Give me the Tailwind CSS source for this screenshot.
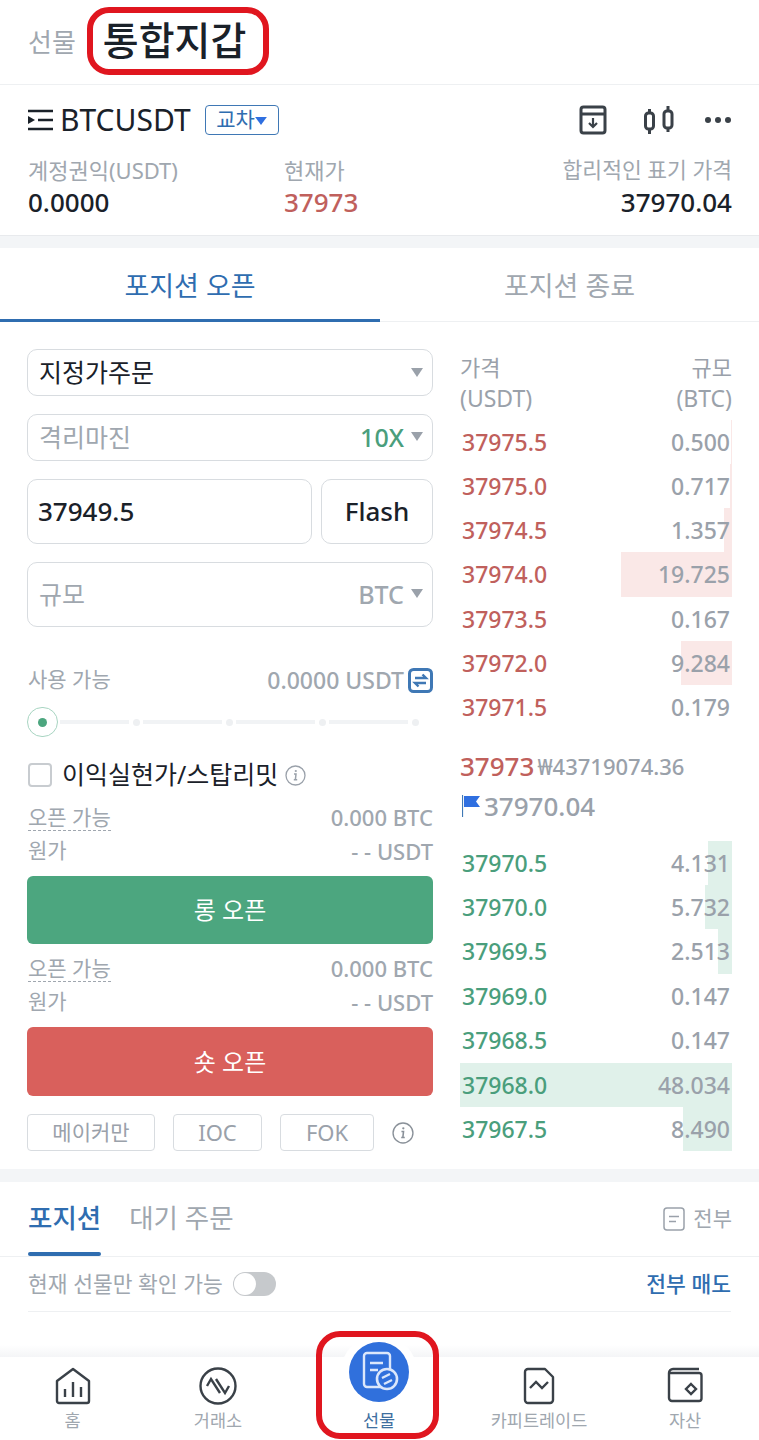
<!DOCTYPE html>
<html lang="ko">
<head>
  <meta charset="UTF-8" />
  <title>Futures</title>
  <script src="https://cdn.jsdelivr.net/npm/@tailwindcss/browser@4"></script>
</head>
<body class="bg-white font-['Noto_Sans','Noto_Sans_CJK_KR',sans-serif] text-[#1a2129]">
<div class="w-[759px] h-[1440px] overflow-hidden flex flex-col">

  <!-- top tabs -->
  <div class="h-[85px] shrink-0 border-b border-[#eef0f2] flex items-center pl-[28px] gap-[27px]">
    <span class="text-[26px] text-[#a0a7af] mt-[1px]">선물</span>
    <span class="relative text-[39px] font-medium leading-none mt-[-6px]">통합지갑
      <span class="absolute left-[-16px] right-[-23px] top-[-13px] bottom-[-16px] border-[6px] border-[#e0161f] rounded-[22px]"></span>
    </span>
  </div>

  <!-- symbol -->
  <div class="h-[151px] shrink-0 border-b border-[#e8eaed] pl-[28px] pr-[27px]">
    <div class="h-[70px] flex items-center">
      <svg class="w-[25px] h-[22px] mr-[7px]" viewBox="0 0 25 22" fill="none">
        <path d="M0 2h25M10 11h15M0 20h25" stroke="#1a2129" stroke-width="2.600"/>
        <path d="M0 7l7 4-7 4z" fill="#1a2129"/>
      </svg>
      <span class="text-[30px] leading-none">BTCUSDT</span>
      <span class="ml-[14px] w-[74px] h-[30px] border border-[#3f78b5] rounded-[4px] flex items-center justify-center text-[#2f6db0] text-[21px]">교차<svg class="w-[12px] h-[9px]" viewBox="0 0 13 10"><path d="M0 1h13L6.500 10z" fill="#2f6fe0"/></svg></span>
      <div class="ml-auto flex items-center">
        <svg class="w-[28px] h-[30px]" viewBox="0 0 28 30" fill="none" stroke="#3a4148" stroke-width="3">
          <rect x="2" y="2" width="24" height="26" rx="2.500"/>
          <path d="M2 9h24"/>
          <path d="M14 13v9M10 18l4 4 4-4" stroke-width="2.200"/>
        </svg>
        <svg class="ml-[37px] w-[30px] h-[28px]" viewBox="0 0 30 28" fill="none" stroke="#3a4148" stroke-width="3">
          <rect x="1.500" y="7" width="8" height="16" rx="3"/>
          <path d="M5.500 3v4M5.500 23v5"/>
          <rect x="20" y="5" width="8" height="17" rx="3"/>
          <path d="M24 0v5M24 22v4"/>
        </svg>
        <svg class="ml-[30px] w-[28px] h-[8px]" viewBox="0 0 28 8" fill="#3a4148">
          <circle cx="4" cy="4" r="3"/><circle cx="14" cy="4" r="3"/><circle cx="24" cy="4" r="3"/>
        </svg>
      </div>
    </div>
    <div class="flex">
      <div class="w-[256px]">
        <div class="text-[22px] leading-[30px] text-[#a0a7af]">계정권익(USDT)</div>
        <div class="text-[26px] leading-[34px] font-medium">0.0000</div>
      </div>
      <div>
        <div class="text-[22px] leading-[30px] text-[#a0a7af]">현재가</div>
        <div class="text-[26px] leading-[34px] font-medium text-[#c0605c]">37973</div>
      </div>
      <div class="ml-auto text-right">
        <div class="text-[21.500px] leading-[30px] text-[#a0a7af]">합리적인 표기 가격</div>
        <div class="text-[26px] leading-[34px] font-medium">37970.04</div>
      </div>
    </div>
  </div>
  <div class="h-[12px] shrink-0 bg-[#f3f5f7]"></div>

  <!-- open / close tabs -->
  <div class="h-[74px] shrink-0 border-b border-[#eef0f2] flex text-[27px]">
    <div class="w-[380px] border-b-[3px] border-[#2f6db0] mb-[-1px] text-[#2f6db0] flex items-center justify-center pt-[5px]">포지션 오픈</div>
    <div class="w-[379px] text-[#a0a7af] flex items-center justify-center pt-[4px]">포지션 종료</div>
  </div>

  <!-- trade panel -->
  <div class="h-[860px] shrink-0 flex pl-[27px] pr-[27px] border-b-[13px] border-[#f3f5f7]">
    <div class="w-[406px] shrink-0 pt-[27px]">
      <div class="h-[47px] border border-[#d8dce0] rounded-[10px] flex items-center pl-[11px] pr-[9px] text-[25px]">지정가주문
        <svg class="ml-auto w-[12px] h-[9px]" viewBox="0 0 12 9"><path d="M0 0h12L6 9z" fill="#9aa1aa"/></svg>
      </div>
      <div class="h-[47px] mt-[18px] border border-[#d8dce0] rounded-[10px] flex items-center pl-[11px] pr-[9px] text-[25px] text-[#a0a7af]">격리마진
        <span class="ml-auto text-[#4a9e7c] font-medium mr-[7px]">10X</span>
        <svg class="w-[12px] h-[9px] mb-[2px]" viewBox="0 0 12 9"><path d="M0 0h12L6 9z" fill="#9aa1aa"/></svg>
      </div>
      <div class="flex gap-[9px] mt-[18px]">
        <div class="w-[285px] h-[65px] border border-[#d8dce0] rounded-[10px] flex items-center px-[10px] text-[26px] font-medium">37949.5</div>
        <div class="w-[112px] h-[65px] border border-[#d8dce0] rounded-[10px] flex items-center justify-center text-[26px] font-medium">Flash</div>
      </div>
      <div class="h-[65px] mt-[18px] border border-[#d8dce0] rounded-[10px] flex items-center pl-[11px] pr-[9px] text-[25px] text-[#a0a7af]">규모
        <span class="ml-auto font-medium mr-[7px]">BTC</span>
        <svg class="w-[12px] h-[9px] mb-[2px]" viewBox="0 0 12 9"><path d="M0 0h12L6 9z" fill="#9aa1aa"/></svg>
      </div>

      <div class="flex items-center mt-[38px] h-[30px] text-[21px] text-[#a0a7af]">
        <span class="ml-[1px]">사용 가능</span>
        <span class="ml-auto font-medium text-[23px]">0.0000 USDT</span>
        <svg class="ml-[4px] w-[25px] h-[25px]" viewBox="0 0 25 25" fill="none">
          <rect x="1.500" y="1.500" width="22" height="22" rx="4" stroke="#3f78b5" stroke-width="3"/>
          <path d="M7 10h11l-3.500-3.500M18 15H7l3.500 3.500" stroke="#3f78b5" stroke-width="2.400"/>
        </svg>
      </div>
      <div class="flex items-center mt-[12px] h-[30px]">
        <span class="w-[31px] h-[30px] rounded-full border border-[#a8d5c2] flex items-center justify-center shrink-0"><span class="w-[9px] h-[9px] rounded-full bg-[#4ca67f]"></span></span>
        <span class="shrink-0 w-[69px] h-[4px] bg-[#f1f3f5] ml-[2px]"></span>
        <span class="shrink-0 w-[7px] h-[7px] rounded-full bg-[#eef0f2] ml-[4px]"></span>
        <span class="shrink-0 w-[79px] h-[4px] bg-[#f1f3f5] ml-[3px]"></span>
        <span class="shrink-0 w-[7px] h-[7px] rounded-full bg-[#eef0f2] ml-[4px]"></span>
        <span class="shrink-0 w-[79px] h-[4px] bg-[#f1f3f5] ml-[3px]"></span>
        <span class="shrink-0 w-[7px] h-[7px] rounded-full bg-[#eef0f2] ml-[4px]"></span>
        <span class="shrink-0 w-[79px] h-[4px] bg-[#f1f3f5] ml-[3px]"></span>
        <span class="shrink-0 w-[7px] h-[7px] rounded-full bg-[#eef0f2] ml-[4px]"></span>
      </div>
      <div class="flex items-center mt-[22px] h-[32px] text-[25px]">
        <span class="ml-[1px] w-[24px] h-[24px] rounded-[4px] border-[2px] border-[#c8ccd0] shrink-0"></span>
        <span class="ml-[10px]">이익실현가/스탑리밋</span>
        <svg class="ml-[7px] w-[21px] h-[21px]" viewBox="0 0 21 21" fill="none" stroke="#9aa1aa" stroke-width="1.300">
          <circle cx="10.500" cy="10.500" r="9.500"/>
          <path d="M9 9h2l-.6 5.500M8.800 14.800h3.400" stroke-width="1.500"/>
          <circle cx="10.800" cy="6" r="1.100" fill="#9aa1aa" stroke="none"/>
        </svg>
      </div>

      <div class="flex items-center mt-[11px] h-[30px] text-[21px] text-[#a0a7af]">
        <span class="ml-[1px] border-b border-dashed border-[#a0a7af] leading-[26px]">오픈 가능</span>
        <span class="ml-auto font-medium text-[22px]">0.000 BTC</span>
      </div>
      <div class="flex items-center mt-[4px] h-[30px] text-[21px] text-[#a0a7af]">
        <span class="ml-[1px]">원가</span>
        <span class="ml-auto font-medium text-[22px]">- - USDT</span>
      </div>
      <div class="h-[68px] mt-[10px] rounded-[6px] bg-[#4ca67f] flex items-center justify-center text-white text-[24px]">롱 오픈</div>

      <div class="flex items-center mt-[9px] h-[30px] text-[21px] text-[#a0a7af]">
        <span class="ml-[1px] border-b border-dashed border-[#a0a7af] leading-[26px]">오픈 가능</span>
        <span class="ml-auto font-medium text-[22px]">0.000 BTC</span>
      </div>
      <div class="flex items-center mt-[4px] h-[30px] text-[21px] text-[#a0a7af]">
        <span class="ml-[1px]">원가</span>
        <span class="ml-auto font-medium text-[22px]">- - USDT</span>
      </div>
      <div class="h-[69px] mt-[10px] rounded-[6px] bg-[#d9605c] flex items-center justify-center text-white text-[24px]">숏 오픈</div>

      <div class="flex items-center mt-[18px] text-[#9aa1aa] text-[22px]">
        <span class="w-[128px] h-[37px] border border-[#d8dce0] rounded-[4px] flex items-center justify-center text-[21px]">메이커만</span>
        <span class="ml-[18px] w-[89px] h-[37px] border border-[#d8dce0] rounded-[4px] flex items-center justify-center">IOC</span>
        <span class="ml-[18px] w-[94px] h-[37px] border border-[#d8dce0] rounded-[4px] flex items-center justify-center">FOK</span>
        <svg class="ml-[18px] w-[22px] h-[22px]" viewBox="0 0 21 21" fill="none" stroke="#8a9199" stroke-width="1.300">
          <circle cx="10.500" cy="10.500" r="9.500"/>
          <path d="M9 9h2l-.6 5.500M8.800 14.800h3.400" stroke-width="1.500"/>
          <circle cx="10.800" cy="6" r="1.100" fill="#8a9199" stroke="none"/>
        </svg>
      </div>
    </div>

    <!-- order book -->
    <div class="ml-[27px] w-[272px] shrink-0 pt-[30px] text-[23px]">
      <div class="flex justify-between text-[22px] leading-[31px] text-[#9aa1aa] h-[62px]">
        <div>가격<br><span class="text-[23px]">(USDT)</span></div>
        <div class="text-right">규모<br><span class="text-[23px]">(BTC)</span></div>
      </div>
      <div class="mt-[6px] font-medium text-[#c0605c]">
        <div class="relative h-[44px] flex justify-between items-center pl-[2px] pr-[2px]"><span class="absolute right-0 inset-y-0 bg-[#fae8e7]" style="width:1px"></span><span class="relative">37975.5</span><span class="relative text-[#9aa1aa]">0.500</span></div>
        <div class="relative h-[44px] flex justify-between items-center pl-[2px] pr-[2px]"><span class="absolute right-0 inset-y-0 bg-[#fae8e7]" style="width:2px"></span><span class="relative">37975.0</span><span class="relative text-[#9aa1aa]">0.717</span></div>
        <div class="relative h-[44px] flex justify-between items-center pl-[2px] pr-[2px]"><span class="absolute right-0 inset-y-0 bg-[#fae8e7]" style="width:8px"></span><span class="relative">37974.5</span><span class="relative text-[#9aa1aa]">1.357</span></div>
        <div class="relative h-[45px] flex justify-between items-center pl-[2px] pr-[2px]"><span class="absolute right-0 inset-y-0 bg-[#fae8e7]" style="width:111px"></span><span class="relative">37974.0</span><span class="relative text-[#9aa1aa]">19.725</span></div>
        <div class="relative h-[44px] flex justify-between items-center pl-[2px] pr-[2px]"><span class="relative">37973.5</span><span class="relative text-[#9aa1aa]">0.167</span></div>
        <div class="relative h-[44px] flex justify-between items-center pl-[2px] pr-[2px]"><span class="absolute right-0 inset-y-0 bg-[#fae8e7]" style="width:51px"></span><span class="relative">37972.0</span><span class="relative text-[#9aa1aa]">9.284</span></div>
        <div class="relative h-[45px] flex justify-between items-center pl-[2px] pr-[2px]"><span class="relative">37971.5</span><span class="relative text-[#9aa1aa]">0.179</span></div>
      </div>
      <div class="flex items-center h-[40px] mt-[16px]">
        <span class="text-[26px] font-medium text-[#c0605c]">37973</span>
        <span class="ml-[3px] text-[22px] font-medium text-[#9aa1aa]">₩43719074.36</span>
      </div>
      <div class="flex items-center h-[40px]">
        <svg class="ml-[2px] w-[18px] h-[22px]" viewBox="0 0 18 22"><path d="M0.500 0v22" stroke="#3f78b5" stroke-width="1.200"/><path d="M2 1h16l-4 5.500L18 12H2z" fill="#2f6fe0"/></svg>
        <span class="ml-[4px] text-[26px] font-medium text-[#9aa1aa]">37970.04</span>
      </div>
      <div class="mt-[15px] font-medium text-[#4a9e7c]">
        <div class="relative h-[44px] flex justify-between items-center pl-[2px] pr-[2px]"><span class="absolute right-0 inset-y-0 bg-[#e0f1ea]" style="width:24px"></span><span class="relative">37970.5</span><span class="relative text-[#9aa1aa]">4.131</span></div>
        <div class="relative h-[44px] flex justify-between items-center pl-[2px] pr-[2px]"><span class="absolute right-0 inset-y-0 bg-[#e0f1ea]" style="width:27px"></span><span class="relative">37970.0</span><span class="relative text-[#9aa1aa]">5.732</span></div>
        <div class="relative h-[45px] flex justify-between items-center pl-[2px] pr-[2px]"><span class="absolute right-0 inset-y-0 bg-[#e0f1ea]" style="width:14px"></span><span class="relative">37969.5</span><span class="relative text-[#9aa1aa]">2.513</span></div>
        <div class="relative h-[44px] flex justify-between items-center pl-[2px] pr-[2px]"><span class="relative">37969.0</span><span class="relative text-[#9aa1aa]">0.147</span></div>
        <div class="relative h-[45px] flex justify-between items-center pl-[2px] pr-[2px]"><span class="relative">37968.5</span><span class="relative text-[#9aa1aa]">0.147</span></div>
        <div class="relative h-[44px] flex justify-between items-center pl-[2px] pr-[2px]"><span class="absolute right-0 inset-y-0 bg-[#e0f1ea]" style="width:272px"></span><span class="relative">37968.0</span><span class="relative text-[#9aa1aa]">48.034</span></div>
        <div class="relative h-[44px] flex justify-between items-center pl-[2px] pr-[2px]"><span class="absolute right-0 inset-y-0 bg-[#e0f1ea]" style="width:49px"></span><span class="relative">37967.5</span><span class="relative text-[#9aa1aa]">8.490</span></div>
      </div>
    </div>
  </div>

  <!-- positions -->
  <div class="h-[75px] shrink-0 border-b border-[#eef0f2] flex items-center pl-[28px] pr-[27px] text-[26.500px]">
    <span class="relative h-full flex items-center text-[#2f6db0] font-medium">포지션
      <span class="absolute left-0 right-0 bottom-0 h-[4px] rounded-[2px] bg-[#2f6db0]"></span>
    </span>
    <span class="ml-[28px] text-[#a0a7af]">대기 주문</span>
    <svg class="ml-auto w-[22px] h-[24px]" viewBox="0 0 22 24" fill="none" stroke="#9aa1aa" stroke-width="1.500">
      <rect x="1" y="1" width="20" height="22" rx="3"/><path d="M6 9.500h10M6 14.500h7"/>
    </svg>
    <span class="ml-[8px] text-[21px] text-[#a0a7af]">전부</span>
  </div>
  <div class="mx-[28px] h-[55px] shrink-0 border-b border-[#eef0f2] flex items-center text-[21.500px] text-[#a0a7af]">
    현재 선물만 확인 가능
    <span class="ml-[10px] w-[43px] h-[24px] rounded-full bg-[#c6c9cc] flex items-center pl-[1px]"><span class="w-[22px] h-[22px] rounded-full bg-white"></span></span>
    <span class="ml-auto font-medium text-[#2f6db0]">전부 매도</span>
  </div>
  <div class="h-[45px] shrink-0 flex flex-col justify-end">
    <div class="h-[12px] bg-gradient-to-b from-white to-[#f4f5f7]"></div>
  </div>

  <!-- bottom nav -->
  <div class="relative flex-1 flex text-[17.500px] text-[#a0a7af]">
    <div class="w-[145px] flex flex-col items-center pt-[10px]">
      <svg class="w-[36px] h-[38px]" viewBox="0 0 36 38" fill="none" stroke="#3a4148" stroke-width="2.400">
        <path d="M2 14L18 2l16 12v20a2 2 0 0 1-2 2H4a2 2 0 0 1-2-2z" stroke-linejoin="round"/>
        <path d="M10 22v8M18 15v15M26 20v10"/>
      </svg>
      <span class="mt-[3px] leading-[24px]">홈</span>
    </div>
    <div class="w-[146px] flex flex-col items-center pt-[10px]">
      <svg class="w-[38px] h-[38px]" viewBox="0 0 38 38" fill="none" stroke="#3a4148" stroke-width="2.400">
        <circle cx="19" cy="19" r="17.500"/>
        <path d="M8 19l4-7 9 14M17 12l9 14 4-7"/>
      </svg>
      <span class="mt-[3px] leading-[24px]">거래소</span>
    </div>
    <div class="relative w-[176px] flex flex-col items-center">
      <span class="absolute top-[-23px] left-[50px] w-[76px] h-[76px] rounded-full bg-white"></span>
      <span class="absolute top-[-15px] left-[58px] w-[60px] h-[60px] rounded-full bg-[#3070dc]">
        <svg class="w-[60px] h-[60px]" viewBox="0 0 60 60" fill="none" stroke="#dbe7fb" stroke-width="2.400">
          <rect x="15" y="11" width="26" height="34" rx="3"/>
          <path d="M21 21h13M21 28h8"/>
          <circle cx="38" cy="37" r="10" fill="#3070dc" stroke-width="2.600"/>
          <path d="M33 36l8-4M35 42l8-4" stroke-width="2.400"/>
        </svg>
      </span>
      <span class="relative mt-[51px] leading-[24px] text-[#3f6f9f]">선물</span>
      <span class="absolute left-[25px] right-[28px] top-[-26px] bottom-[1px] border-[6px] border-[#e0161f] rounded-[24px]"></span>
    </div>
    <div class="w-[144px] flex flex-col items-center pt-[10px]">
      <svg class="w-[32px] h-[38px]" viewBox="0 0 32 38" fill="none" stroke="#3a4148" stroke-width="2.400">
        <path d="M5 2h17l8 8v23a3 3 0 0 1-3 3H5a3 3 0 0 1-3-3V5a3 3 0 0 1 3-3z" stroke-linejoin="round"/>
        <path d="M7 21l6-6 6 6 6-6"/>
      </svg>
      <span class="mt-[3px] leading-[24px]">카피트레이드</span>
    </div>
    <div class="w-[148px] flex flex-col items-center pt-[10px]">
      <svg class="w-[36px] h-[36px] mb-[2px]" viewBox="0 0 36 36" fill="none" stroke="#3a4148" stroke-width="2.400">
        <path d="M32 2H6a4 4 0 0 0-4 4v25a3 3 0 0 0 3 3h27a2.500 2.500 0 0 0 2.500-2.500V8.500A2.500 2.500 0 0 0 32 6H3"/>
        <path d="M24 17l5 5-5 5-5-5z"/>
      </svg>
      <span class="mt-[3px] leading-[24px]">자산</span>
    </div>
  </div>
</div>
</body>
</html>
